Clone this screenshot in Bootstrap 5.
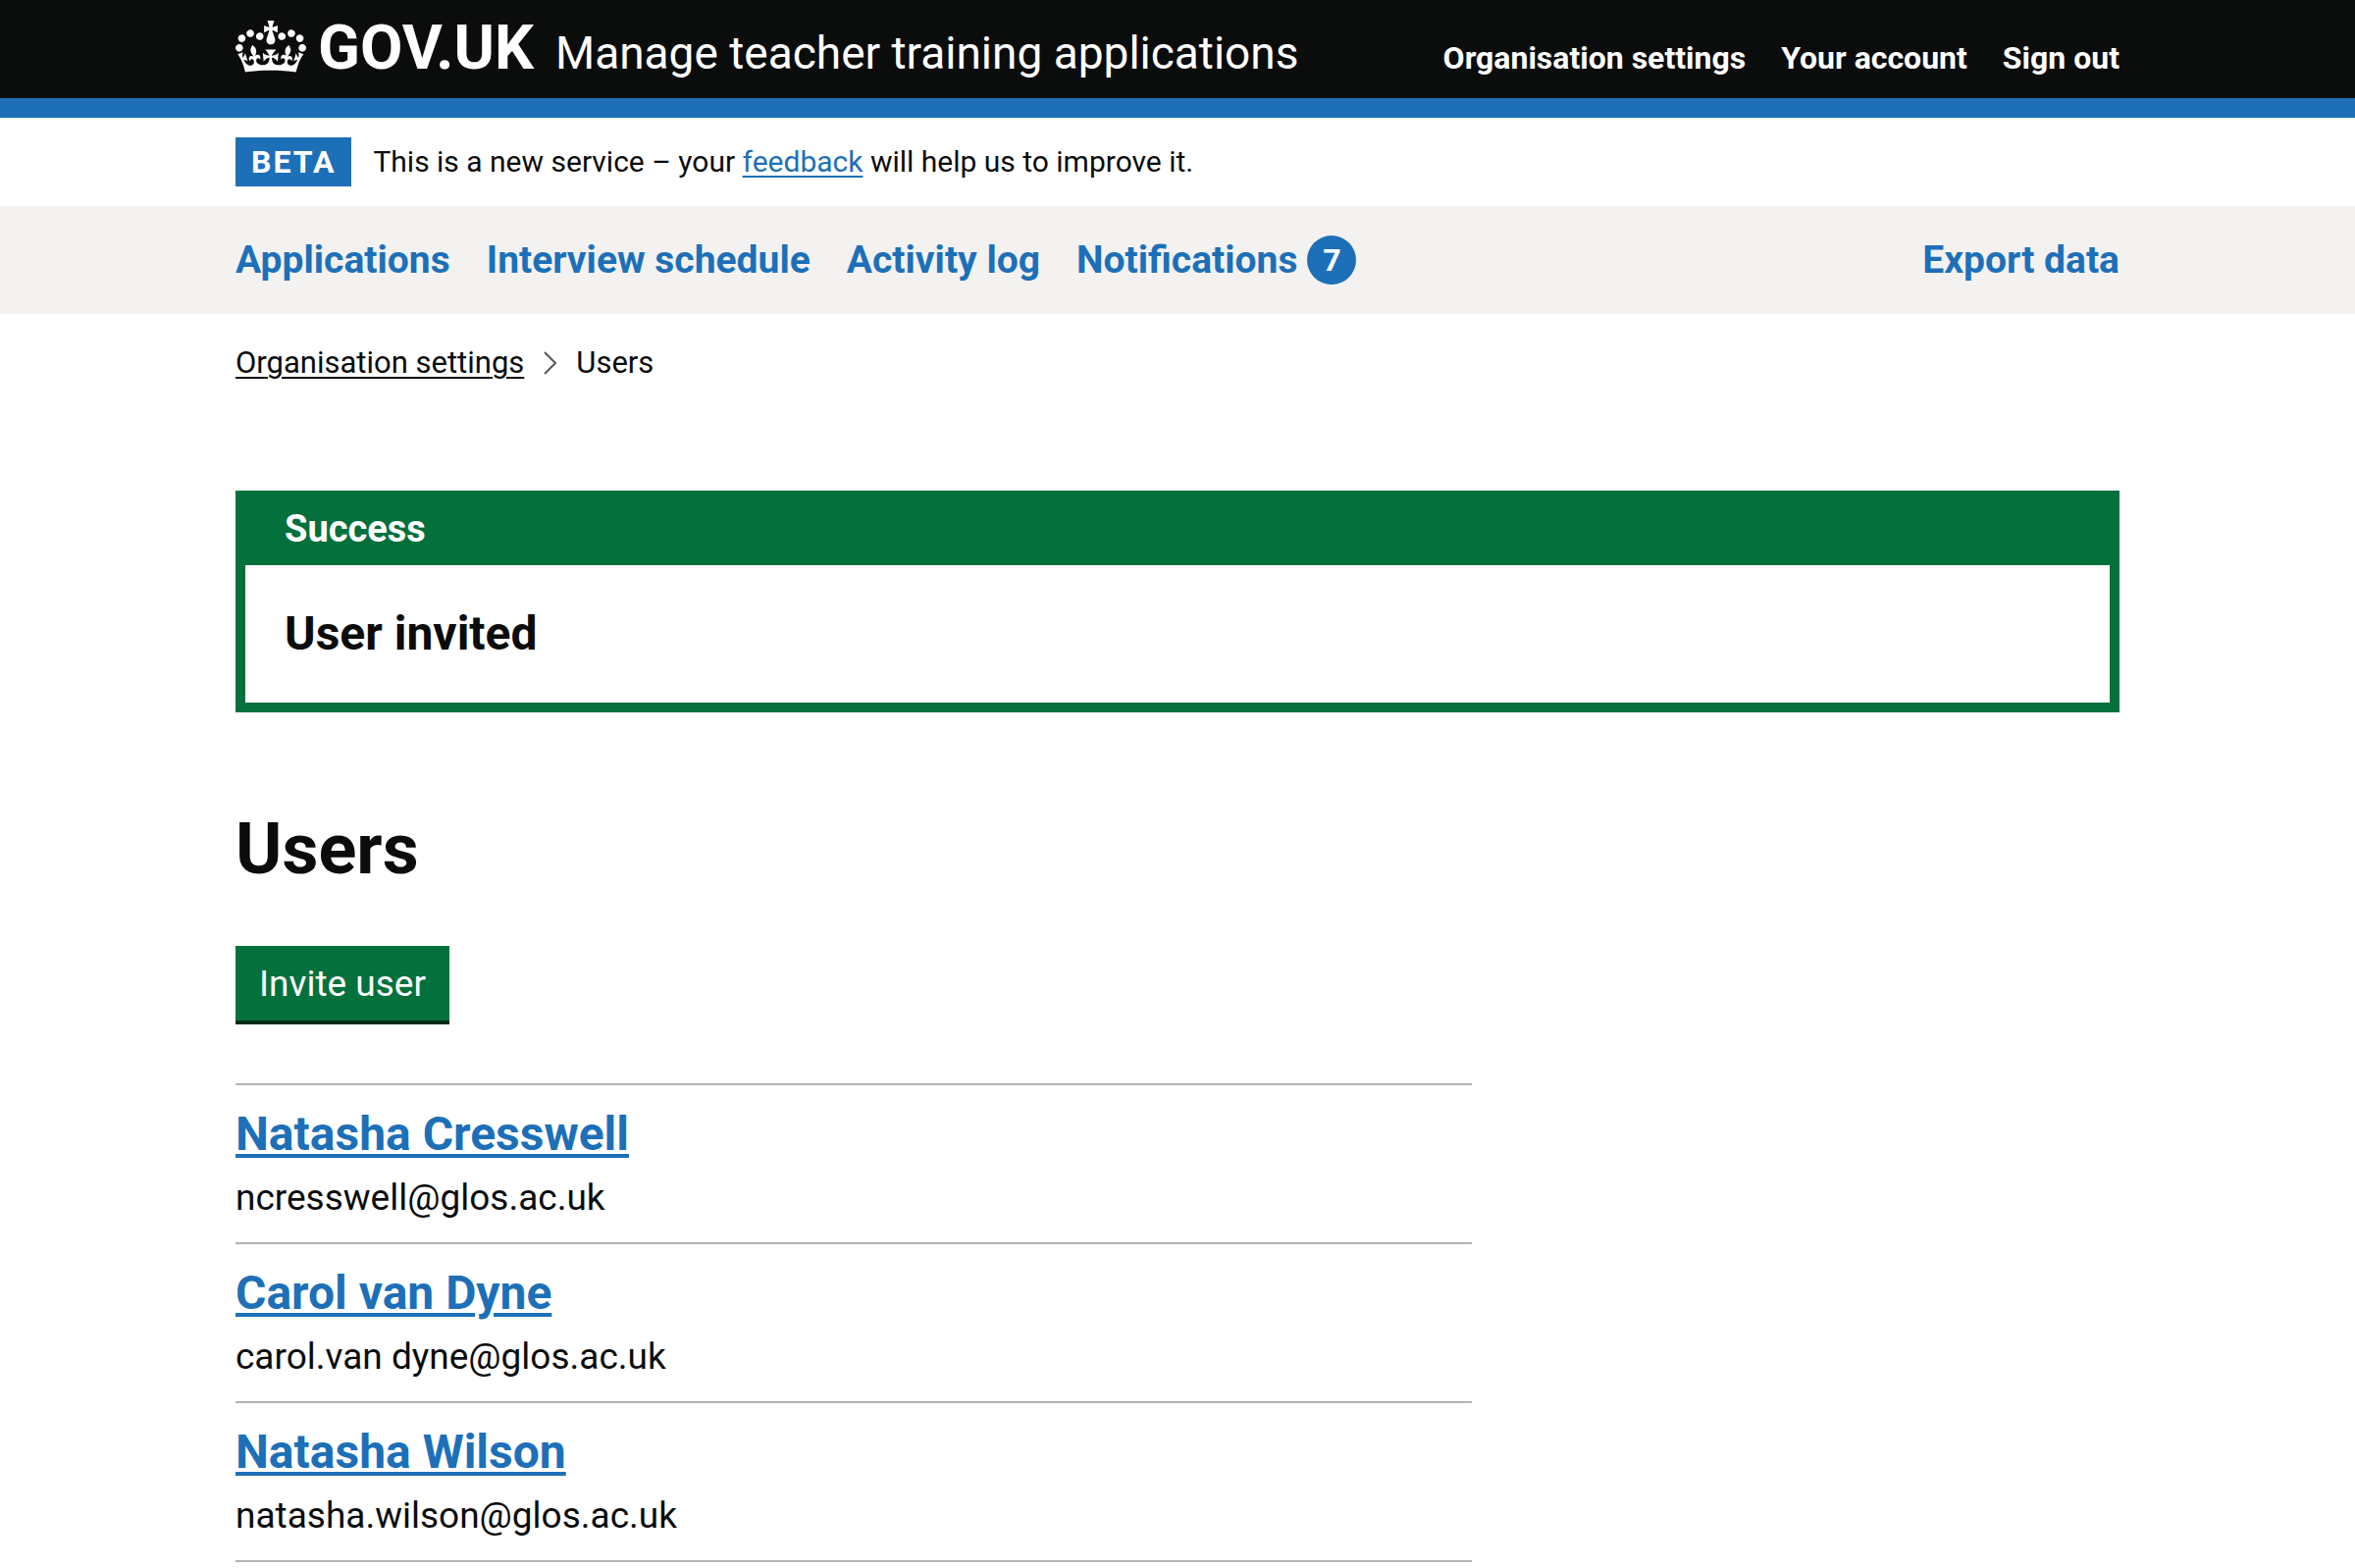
<!DOCTYPE html>
<html lang="en">
<head>
<meta charset="utf-8">
<meta name="viewport" content="width=device-width, initial-scale=1">
<title>Users - Manage teacher training applications - GOV.UK</title>
<link href="https://cdn.jsdelivr.net/npm/bootstrap@5.3.0/dist/css/bootstrap.min.css" rel="stylesheet">
<style>
:root{--ink:#0b0c0c;--blue:#1d70b8;--green:#04703c}
body{font-family:Roboto,"Liberation Sans",sans-serif;font-size:37px;line-height:50px;color:var(--ink);background:#fff}
.page-width{width:100%;max-width:1980px;padding-left:30px;padding-right:30px;margin-left:auto;margin-right:auto}
.text-xs{font-size:30px;line-height:40px}
.text-s{font-size:32px;line-height:40px}
.text-m{font-size:38px;line-height:50px}
.text-l{font-size:48px;line-height:60px}
.site-header{background:var(--ink);border-bottom:20px solid var(--blue)}
.header-bar{min-height:100px;column-gap:36px;padding-top:19px}
.header-bar a{color:#fff;text-decoration:none}
.crown{width:72px;height:53px;margin-top:2px}
.brand-name{font-size:63px;line-height:60px}
.service-name{font-size:46px;line-height:60px}
.brand-gap{gap:12px}
.service-gap{column-gap:22px}
.link-gap{column-gap:36px}
.phase-row{padding:20px 0;column-gap:22px}
.phase-tag{background:var(--blue);color:#fff;letter-spacing:2px;line-height:50px;padding:0 16px}
.text-link{color:var(--blue);text-decoration-thickness:2px;text-underline-offset:4px}
.primary-nav{background:#f3f2f1}
.nav-row{padding:30px 0;column-gap:37px;font-size:39px}
.nav-row a{color:var(--blue);text-decoration:none}
.count-dot{width:50px;height:50px;background:var(--blue);color:#fff}
.count-gap{gap:10px}
.crumbs{padding-top:30px;margin-bottom:110px;font-size:31px;line-height:40px}
.crumbs a{color:var(--ink);text-decoration-thickness:2px;text-underline-offset:4px}
.crumb-gap{column-gap:20px}
.crumb-arrow{width:13px;height:24px}
.notice{border:10px solid var(--green);margin-bottom:100px}
.notice-head{background:var(--green);color:#fff;padding:4px 40px 12px}
.notice-body{padding:40px}
.page-title{font-size:72px;line-height:80px;margin-bottom:58px}
.btn-invite{--bs-btn-color:#fff;--bs-btn-bg:var(--green);--bs-btn-hover-color:#fff;--bs-btn-hover-bg:#005a30;--bs-btn-active-color:#fff;--bs-btn-active-bg:#005a30;--bs-btn-border-radius:0;--bs-btn-border-width:0;--bs-btn-font-size:37px;--bs-btn-line-height:50px;padding:14px 24px 12px;box-shadow:0 4px 0 #002d18;margin-bottom:64px}
.wide-gutter{--bs-gutter-x:60px}
.user-list{border-top:2px solid #b1b4b6}
.user-item{border-bottom:2px solid #b1b4b6;padding:20px 0}
.user-item h2{margin-bottom:10px}
.user-item a{color:var(--blue);text-decoration-thickness:4px;text-underline-offset:4px}
</style>
</head>
<body>
<header class="site-header">
  <div class="page-width">
    <div class="header-bar d-flex flex-wrap align-items-baseline justify-content-between">
      <div class="d-flex flex-wrap align-items-baseline service-gap">
        <a href="#" class="d-flex brand-gap" aria-label="GOV.UK">
          <svg class="crown align-self-start" viewBox="0 0 132 97" fill="#fff" aria-hidden="true"><path fill-rule="evenodd" d="M25 30.2c3.5 1.5 7.7-.2 9.1-3.7 1.5-3.6-.2-7.8-3.9-9.2-3.6-1.4-7.6.3-9.1 3.9-1.4 3.5.3 7.5 3.9 9zM9 39.5c3.6 1.5 7.8-.2 9.2-3.7 1.5-3.6-.2-7.8-3.9-9.1-3.6-1.5-7.6.2-9.1 3.8-1.4 3.5.3 7.5 3.8 9zM4.4 57.2c3.5 1.5 7.7-.2 9.1-3.8 1.5-3.6-.2-7.7-3.9-9.1-3.5-1.5-7.6.3-9.1 3.8-1.4 3.5.3 7.6 3.9 9.1zm38.3-21.4c3.5 1.5 7.7-.2 9.1-3.8 1.5-3.6-.2-7.7-3.9-9.1-3.6-1.5-7.6.3-9.1 3.8-1.3 3.6.4 7.7 3.9 9.1zm64.4-5.6c-3.6 1.5-7.8-.2-9.1-3.7-1.5-3.6.2-7.8 3.8-9.2 3.6-1.4 7.7.3 9.2 3.9 1.3 3.5-.4 7.5-3.9 9zm15.9 9.3c-3.6 1.5-7.7-.2-9.1-3.7-1.5-3.6.2-7.8 3.7-9.1 3.6-1.5 7.7.2 9.2 3.8 1.5 3.5-.3 7.5-3.8 9zm4.7 17.7c-3.6 1.5-7.8-.2-9.2-3.8-1.5-3.6.2-7.7 3.9-9.1 3.6-1.5 7.7.3 9.2 3.8 1.3 3.5-.4 7.6-3.9 9.1zM89.3 35.8c-3.6 1.5-7.8-.2-9.2-3.8-1.4-3.6.2-7.7 3.9-9.1 3.6-1.5 7.7.3 9.2 3.8 1.4 3.6-.3 7.7-3.9 9.1zM69.7 17.7l8.9 4.7V9.3l-8.9 2.8c-.2-.3-.5-.6-.9-.9L72.4 0H59.6l3.5 11.2c-.3.3-.6.5-.9.9l-8.8-2.8v13.1l8.8-4.7c.3.3.6.7.9.9l-5 15.4v.1c-.2.8-.4 1.6-.4 2.4 0 4.1 3.1 7.5 7 8.1h.2c.3 0 .7.1 1 .1.4 0 .7 0 1-.1h.2c4-.6 7.1-4.1 7.1-8.1 0-.8-.1-1.7-.4-2.4V34l-5.1-15.4c.4-.2.7-.6 1-.9zM66 92.8c16.9 0 32.8 1.1 47.1 3.2 4-16.9 8.9-26.7 14-33.5l-9.6-3.4c1 4.9 1.1 7.2 0 10.2-1.5-1.4-3-4.3-4.2-8.7L108.6 76c2.8-2 5-3.2 7.5-3.3-4.4 9.4-10 11.9-13.6 11.2-4.3-.8-6.3-4.6-5.6-7.9 1-4.7 5.7-5.9 8-.5 4.3-8.7-3-11.4-7.6-8.8 7.1-7.2 7.9-13.5 2.1-21.1-8 6.1-8.1 12.3-4.5 20.8-4.7-5.4-12.1-2.5-9.5 6.2 3.4-5.2 7.9-2 7.2 3.1-.6 4.3-6.4 7.8-13.5 7.2-10.3-.9-10.9-8-11.2-13.8 2.5-.5 7.1 1.8 11 7.3L80.2 60c-4.1 4.4-8 5.3-12.3 5.4 1.4-4.4 8-11.6 8-11.6H55.5s6.4 7.2 7.9 11.6c-4.2-.1-8-1-12.3-5.4l1.4 16.4c3.9-5.5 8.5-7.7 10.9-7.3-.3 5.8-.9 12.8-11.1 13.8-7.2.6-12.9-2.9-13.5-7.2-.7-5 3.8-8.3 7.1-3.1 2.7-8.7-4.6-11.6-9.4-6.2 3.7-8.5 3.6-14.7-4.6-20.8-5.8 7.6-5 13.9 2.2 21.1-4.7-2.6-11.9.1-7.7 8.8 2.3-5.5 7.1-4.2 8.1.5.7 3.3-1.3 7.1-5.7 7.9-3.5.7-9-1.8-13.5-11.2 2.5.1 4.7 1.3 7.5 3.3l-4.7-15.4c-1.2 4.4-2.7 7.2-4.3 8.7-1.1-3-.9-5.3 0-10.2l-9.5 3.4c5 6.9 9.9 16.7 14 33.5 14.8-2.1 30.8-3.2 47.7-3.2z"/></svg>
          <span class="brand-name align-self-baseline fw-bold">GOV.UK</span>
        </a>
        <a href="#" class="service-name">Manage teacher training applications</a>
      </div>
      <nav class="d-flex flex-wrap link-gap text-s fw-bold" aria-label="Account">
        <a href="#">Organisation settings</a>
        <a href="#">Your account</a>
        <a href="#">Sign out</a>
      </nav>
    </div>
  </div>
</header>
<div class="page-width">
  <div class="phase-row d-flex flex-wrap align-items-center text-s">
    <strong class="phase-tag">BETA</strong>
    <span class="text-xs">This is a new service – your <a href="#" class="text-link">feedback</a> will help us to improve it.</span>
  </div>
</div>
<nav class="primary-nav" aria-label="Primary">
  <div class="page-width">
    <div class="nav-row d-flex flex-wrap align-items-center fw-bold">
      <a href="#">Applications</a>
      <a href="#">Interview schedule</a>
      <a href="#">Activity log</a>
      <a href="#" class="d-flex align-items-center count-gap">Notifications <span class="count-dot text-s rounded-circle d-flex align-items-center justify-content-center">7</span></a>
      <a href="#" class="ms-auto">Export data</a>
    </div>
  </div>
</nav>
<div class="page-width">
  <nav class="crumbs" aria-label="Breadcrumb">
    <ol class="list-unstyled d-flex flex-wrap align-items-center crumb-gap mb-0">
      <li><a href="#">Organisation settings</a></li>
      <li class="d-flex align-items-center crumb-gap" aria-current="page"><svg class="crumb-arrow" viewBox="0 0 13 24" fill="none" stroke="#505a5f" stroke-width="2" aria-hidden="true"><path d="M1 1l11 11L1 23"/></svg>Users</li>
    </ol>
  </nav>
  <main>
    <section class="notice" role="alert" aria-labelledby="notice-title">
      <h2 class="notice-head text-m fw-bold mb-0" id="notice-title">Success</h2>
      <div class="notice-body"><p class="text-l fw-bold mb-0">User invited</p></div>
    </section>
    <h1 class="page-title fw-bold">Users</h1>
    <button type="button" class="btn btn-invite">Invite user</button>
    <div class="row wide-gutter">
      <div class="col-md-8">
        <ul class="user-list list-unstyled mb-0">
          <li class="user-item"><h2 class="text-l fw-bold"><a href="#">Natasha Cresswell</a></h2><p class="mb-0">ncresswell@glos.ac.uk</p></li>
          <li class="user-item"><h2 class="text-l fw-bold"><a href="#">Carol van Dyne</a></h2><p class="mb-0">carol.van dyne@glos.ac.uk</p></li>
          <li class="user-item"><h2 class="text-l fw-bold"><a href="#">Natasha Wilson</a></h2><p class="mb-0">natasha.wilson@glos.ac.uk</p></li>
        </ul>
      </div>
    </div>
  </main>
</div>
<script src="https://cdn.jsdelivr.net/npm/bootstrap@5.3.0/dist/js/bootstrap.bundle.min.js"></script>
</body>
</html>
